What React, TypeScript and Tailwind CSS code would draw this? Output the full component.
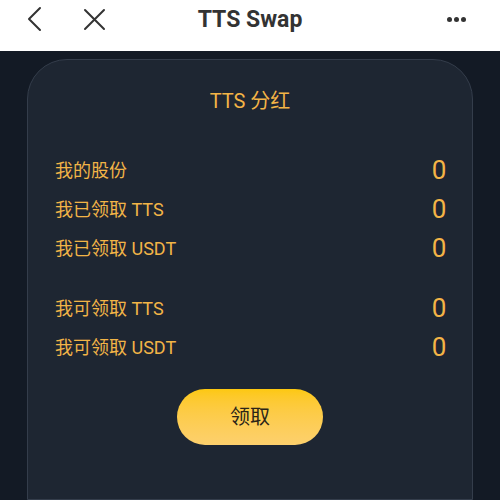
const rows = [
  { label: '我的股份', value: '0' },
  { label: '我已领取 TTS', value: '0' },
  { label: '我已领取 USDT', value: '0' },
]

const claimRows = [
  { label: '我可领取 TTS', value: '0' },
  { label: '我可领取 USDT', value: '0' },
]

const font = { fontFamily: 'Roboto, "Noto Sans CJK SC", sans-serif' }

function Row({ label, value }: { label: string; value: string }) {
  return (
    <div className="flex items-center justify-between h-[39px]">
      <span className="text-[18px] text-[#f2b447]">{label}</span>
      <span className="text-[26px] text-[#f4b446] w-[20px] text-center mr-[-4px]">{value}</span>
    </div>
  )
}

export default function App() {
  return (
    <div className="w-[500px] h-[500px] overflow-hidden bg-[#131a25] flex flex-col" style={font}>
      {/* Top bar */}
      <div className="h-[51px] bg-white flex items-start relative shrink-0">
        <svg className="absolute left-[25px] top-[6px]" width="18" height="26" viewBox="0 0 18 26" fill="none">
          <path d="M15 2 L4 13 L15 24" stroke="#333" strokeWidth="2" strokeLinecap="round" strokeLinejoin="round" />
        </svg>
        <svg className="absolute left-[82px] top-[7px]" width="25" height="25" viewBox="0 0 25 25" fill="none">
          <path d="M3 3 L22 22 M22 3 L3 22" stroke="#333" strokeWidth="2" strokeLinecap="round" />
        </svg>
        <div className="absolute left-0 right-0 top-0 h-[41px] flex items-center justify-center">
          <span className="text-[23px] font-bold text-[#333]">TTS Swap</span>
        </div>
        <div className="absolute right-[34px] top-[17px] flex gap-[2px]">
          <span className="w-[5px] h-[5px] rounded-full bg-[#333]" />
          <span className="w-[5px] h-[5px] rounded-full bg-[#333]" />
          <span className="w-[5px] h-[5px] rounded-full bg-[#333]" />
        </div>
      </div>

      {/* Card */}
      <div className="px-[27px] pt-[8px] flex-1">
        <div className="h-full bg-[#1e2632] border border-[#343d4b] rounded-t-[40px] px-[27px] pt-[26px]">
          <div className="text-center text-[20px] text-[#f4b446] mb-[35px]">TTS 分红</div>
          <div className="flex flex-col">
            {rows.map((r) => (
              <Row key={r.label} {...r} />
            ))}
          </div>
          <div className="flex flex-col mt-[21px]">
            {claimRows.map((r) => (
              <Row key={r.label} {...r} />
            ))}
          </div>
          <div className="flex justify-center mt-[22px]">
            <button className="w-[146px] h-[56px] rounded-full bg-gradient-to-b from-[#fdc80f] to-[#fdd06d] text-[20px] text-[#2a2418]">
              领取
            </button>
          </div>
        </div>
      </div>
    </div>
  )
}
